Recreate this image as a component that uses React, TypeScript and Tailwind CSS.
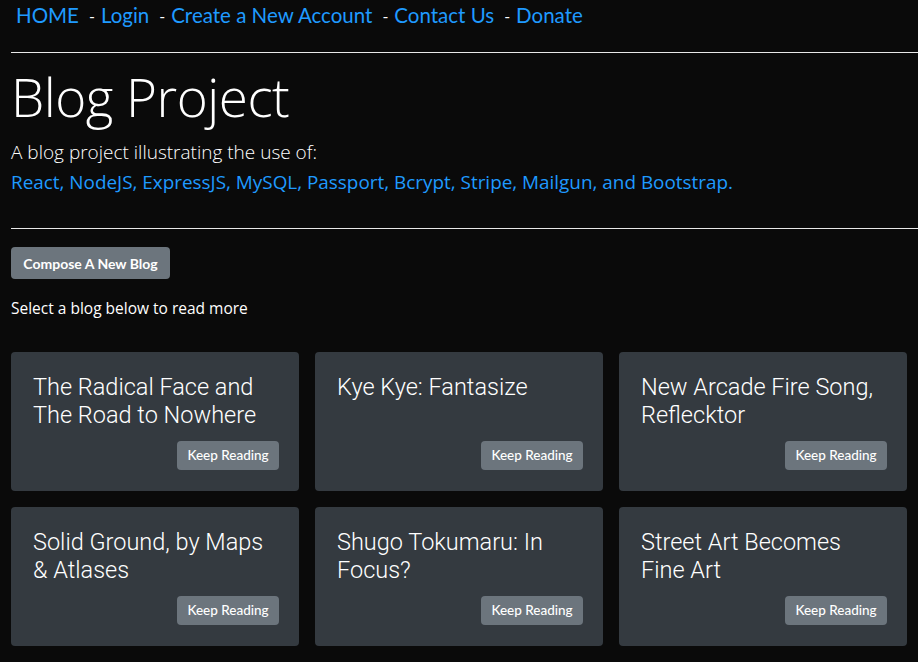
const navLinks = ["HOME", "Login", "Create a New Account", "Contact Us", "Donate"];

const blogs = [
  "The Radical Face and The Road to Nowhere",
  "Kye Kye: Fantasize",
  "New Arcade Fire Song, Reflecktor",
  "Solid Ground, by Maps & Atlases",
  "Shugo Tokumaru: In Focus?",
  "Street Art Becomes Fine Art",
];

export default function App() {
  return (
    <div className="min-h-[662px] bg-[#0a0a0a] text-white overflow-hidden">
      {/* Nav */}
      <nav className="h-[31px] pl-[16px] flex items-center font-['Lato',sans-serif] text-[20.5px] leading-none">
        {navLinks.map((link, i) => (
          <span key={link} className="flex items-center">
            {i > 0 && <span className="text-white text-[16px] pl-[10px] pr-[6px]">-</span>}
            <a href="#" className="text-[#1f9aff]">
              {link}
            </a>
          </span>
        ))}
      </nav>

      <div className="pl-[11px]">
        <hr className="mt-[21px] border-0 h-px bg-[#e8e8e8]" />

        {/* Header */}
        <div className="font-['Open_Sans',sans-serif]">
          <h1 className="mt-[11px] text-[53px] font-light leading-[66px] tracking-[-0.5px]">Blog Project</h1>
          <p className="mt-[7px] text-[19px] font-light leading-[30px]">A blog project illustrating the use of:</p>
          <p className="text-[18.9px] leading-[30px] text-[#1f9aff]">
            React, NodeJS, ExpressJS, MySQL, Passport, Bcrypt, Stripe, Mailgun, and Bootstrap.
          </p>
        </div>

        <hr className="mt-[31px] border-0 h-px bg-[#e8e8e8]" />

        <button className="mt-[18px] h-[32px] w-[159px] rounded-[4px] bg-[#6c757d] text-[14px] font-bold font-['Lato',sans-serif] text-white">
          Compose A New Blog
        </button>

        <p className="mt-[17px] font-['Open_Sans',sans-serif] text-[15.5px] leading-[24px]">Select a blog below to read more</p>

        {/* Blog cards */}
        <div className="mt-[32px] grid grid-cols-[repeat(3,288px)] gap-[16px]">
          {blogs.map((title) => (
            <div
              key={title}
              className="h-[139px] rounded-[4px] bg-[#343a40] pt-[21px] pl-[22px] pr-[20px] pb-[21px] flex flex-col justify-between"
            >
              <h2 className="font-['Roboto',sans-serif] font-light text-[23.5px] leading-[28px] text-white">
                {title}
              </h2>
              <div className="flex justify-end">
                <button className="h-[29px] w-[102px] rounded-[4px] bg-[#6c757d] text-[13.5px] font-['Lato',sans-serif] font-medium text-white">
                  Keep Reading
                </button>
              </div>
            </div>
          ))}
        </div>
      </div>
    </div>
  );
}
